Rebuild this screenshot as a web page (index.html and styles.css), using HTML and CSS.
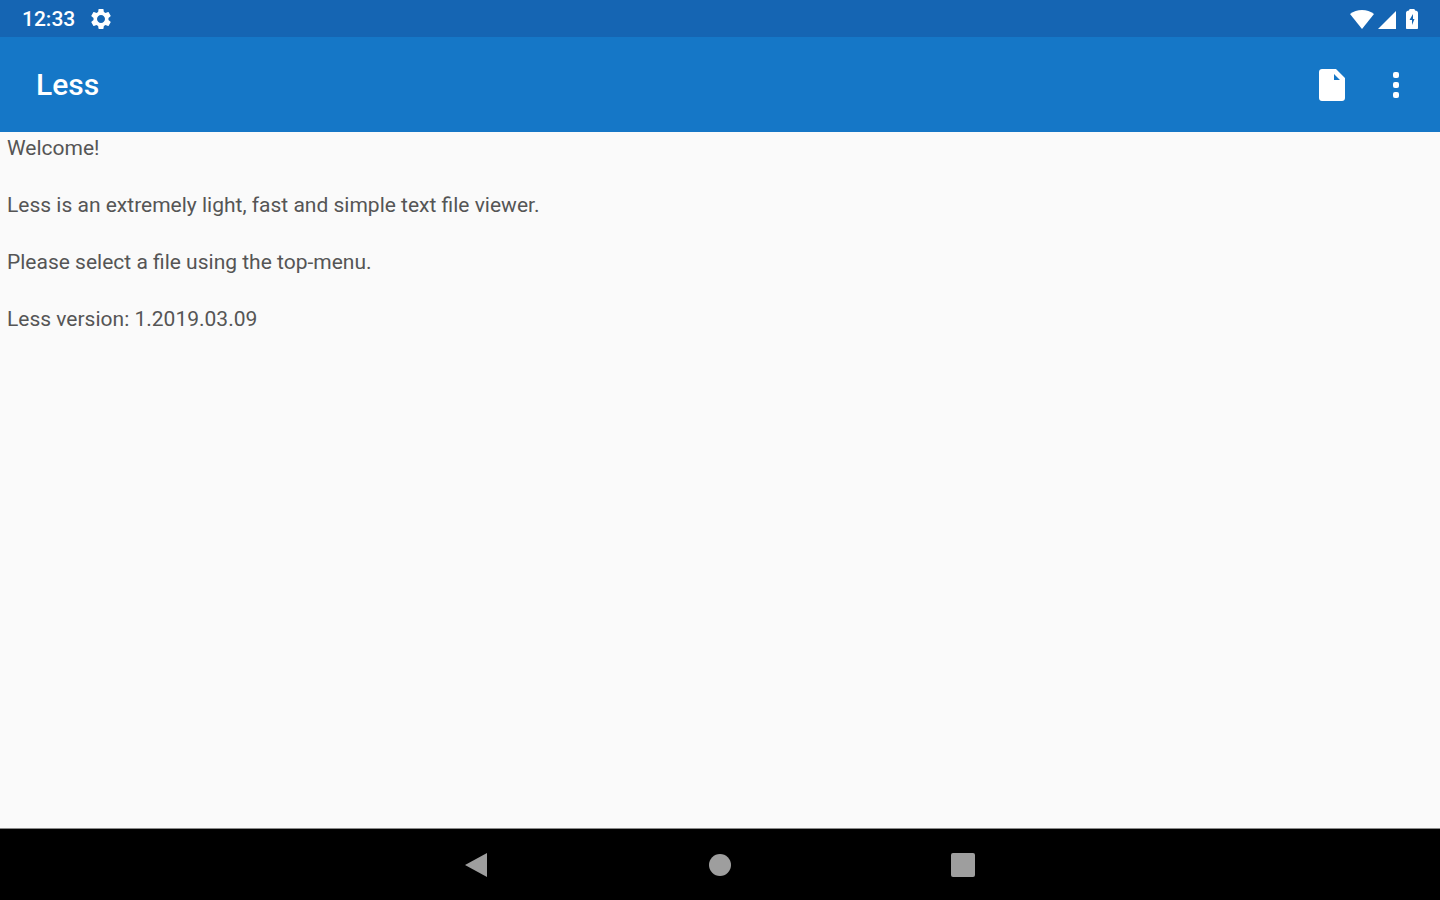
FILE: index.html
```html
<!DOCTYPE html>
<html lang="en">
<head>
    <meta charset="UTF-8">
    <meta name="viewport" content="width=device-width, initial-scale=1.0">
    <title>Less</title>
    <link rel="stylesheet" href="styles.css">
</head>
<body>
    <div class="status-bar">
        <div class="status-left">
            <span class="clock">12:33</span>
            <svg class="gear" viewBox="2 2 20 20" aria-hidden="true">
                <path d="M19.43 12.98c.04-.32.07-.64.07-.98s-.03-.66-.07-.98l2.11-1.65c.19-.15.24-.42.12-.64l-2-3.46c-.12-.22-.39-.3-.61-.22l-2.49 1c-.52-.4-1.08-.73-1.69-.98l-.38-2.65C14.46 2.18 14.25 2 14 2h-4c-.25 0-.46.18-.49.42l-.38 2.65c-.61.25-1.17.59-1.69.98l-2.49-1c-.23-.09-.49 0-.61.22l-2 3.46c-.13.22-.07.49.12.64l2.11 1.65c-.04.32-.07.65-.07.98s.03.66.07.98l-2.11 1.65c-.19.15-.24.42-.12.64l2 3.46c.12.22.39.3.61.22l2.49-1c.52.4 1.08.73 1.69.98l.38 2.65c.03.24.24.42.49.42h4c.25 0 .46-.18.49-.42l.38-2.65c.61-.25 1.17-.59 1.69-.98l2.49 1c.23.09.49 0 .61-.22l2-3.46c.12-.22.07-.49-.12-.64l-2.11-1.65zM12 16c-2.200 0-4-1.800-4-4s1.800-4 4-4 4 1.800 4 4-1.800 4-4 4z"/>
            </svg>
        </div>
        <div class="status-right">
            <svg class="wifi" viewBox="0 0 24 19" aria-hidden="true">
                <path d="M0 4C3.500 1.300 7.500 0 12 0s8.500 1.300 12 4L12 19z"/>
            </svg>
            <svg class="signal" viewBox="0 0 18 18" aria-hidden="true">
                <path d="M0 18h18V0z"/>
            </svg>
            <svg class="battery" viewBox="0 0 12 20" aria-hidden="true">
                <path fill-rule="evenodd" d="M3 1.500C3 .7 3.500 0 4.500 0h3C8.500 0 9 .7 9 1.500c2 .3 3 1.200 3 2.500v15c0 .6-.4 1-1 1H1c-.6 0-1-.4-1-1V4c0-1.300 1-2.200 3-2.500zM7 5l-3.500 6H6v5l2.500-6H7z"/>
            </svg>
        </div>
    </div>

    <header class="toolbar">
        <h1>Less</h1>
        <div class="actions">
            <button type="button" aria-label="Open file">
                <svg class="file" viewBox="0 0 26 32" aria-hidden="true">
                    <path fill-rule="evenodd" d="M3 0h14l9 9v20c0 1.700-1.300 3-3 3H3c-1.700 0-3-1.300-3-3V3c0-1.700 1.300-3 3-3zM15 5v6h6z"/>
                </svg>
            </button>
            <button type="button" aria-label="More options">
                <svg class="more" viewBox="0 0 6 26" aria-hidden="true">
                    <rect width="6" height="6" rx="2"/>
                    <rect y="10" width="6" height="6" rx="2"/>
                    <rect y="20" width="6" height="6" rx="2"/>
                </svg>
            </button>
        </div>
    </header>

    <main>
        <p>Welcome!</p>
        <p>Less is an extremely light, fast and simple text file viewer.</p>
        <p>Please select a file using the top-menu.</p>
        <p>Less version: 1.2019.03.09</p>
    </main>

    <nav class="nav-bar">
        <button type="button" aria-label="Back">
            <svg viewBox="0 0 26 26" aria-hidden="true"><path d="M1 13L23 1v24z"/></svg>
        </button>
        <button type="button" aria-label="Home">
            <svg viewBox="0 0 26 26" aria-hidden="true"><circle cx="13" cy="13" r="11"/></svg>
        </button>
        <button type="button" aria-label="Recent apps">
            <svg viewBox="0 0 26 26" aria-hidden="true"><rect x="1" y="1" width="24" height="24" rx="2"/></svg>
        </button>
    </nav>
</body>
</html>
```
FILE: styles.css
```css
body {
    margin: 0;
    min-height: 100vh;
    display: flex;
    flex-direction: column;
    font-family: Roboto, sans-serif;
    background-color: #fafafa;
    color: #555;
}

svg {
    display: block;
    fill: currentColor;
}

button {
    display: flex;
    align-items: center;
    justify-content: center;
    padding: 0;
    border: none;
    background: none;
    color: inherit;
    cursor: pointer;
}

/* System status bar */
.status-bar {
    display: flex;
    justify-content: space-between;
    align-items: center;
    height: 37px;
    padding: 0 22px;
    background-color: #1565b3;
    color: #fff;
}

.status-left {
    display: flex;
    align-items: center;
    gap: 16px;
}

.clock {
    font-size: 21px;
    font-weight: 500;
    line-height: 24px;
}

.gear {
    width: 20px;
    height: 20px;
}

.status-right {
    display: flex;
    align-items: flex-end;
    gap: 4px;
}

.wifi {
    width: 24px;
    height: 19px;
}

.signal {
    width: 18px;
    height: 18px;
}

.battery {
    width: 12px;
    height: 20px;
    margin-left: 6px;
}

/* App toolbar */
.toolbar {
    display: flex;
    justify-content: space-between;
    align-items: center;
    height: 95px;
    padding: 0 12px 0 36px;
    background-color: #1577c7;
    color: #fff;
}

h1 {
    margin: 0;
    font-size: 30px;
    font-weight: 500;
    line-height: 36px;
}

.actions {
    display: flex;
}

.actions button {
    width: 64px;
    height: 64px;
}

.file {
    width: 26px;
    height: 32px;
}

.more {
    width: 6px;
    height: 26px;
}

main {
    flex: 1;
    display: flex;
    flex-direction: column;
    gap: 29px;
    padding: 2px 7px;
}

p {
    margin: 0;
    font-size: 21px;
    line-height: 28px;
}

/* System navigation */
.nav-bar {
    display: flex;
    justify-content: center;
    height: 71px;
    border-top: 1px solid #8a8a8a;
    background-color: #000;
    color: #9e9e9e;
}

.nav-bar button {
    width: 243px;
}

.nav-bar svg {
    width: 26px;
    height: 26px;
}
```
